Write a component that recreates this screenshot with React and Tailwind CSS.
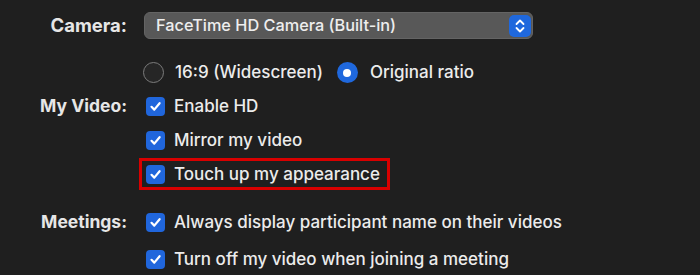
const Check = () => (
  <span className="w-[19px] h-[19px] rounded-[4px] bg-[#2066dc] flex items-center justify-center shrink-0">
    <svg width="13" height="13" viewBox="0 0 13 13" fill="none">
      <path d="M2.5 6.8 L5.3 9.6 L10.6 3.2" stroke="white" strokeWidth="2.2" strokeLinecap="round" strokeLinejoin="round" />
    </svg>
  </span>
);

const Label = ({ children, className = 'text-[17.5px]' }) => (
  <span className={`w-[127px] shrink-0 text-right font-bold text-[#e6e6e6] ${className}`}>{children}</span>
);

const CheckRow = ({ label, text, className = '' }) => (
  <div className={`flex items-center h-[24px] ${className}`}>
    <Label>{label}</Label>
    <div className="ml-[19px] flex items-center gap-[9px]">
      <Check />
      <span>{text}</span>
    </div>
  </div>
);

export default function App() {
  return (
    <div
      className="w-[700px] h-[275px] bg-[#1f1f1f] text-[#ececec] text-[17px] font-medium leading-none overflow-hidden"
      style={{ fontFamily: 'Inter, "Liberation Sans", sans-serif' }}
    >
      <div className="flex flex-col pt-[12px]">
        {/* Camera */}
        <div className="flex items-center h-[27px]">
          <Label className="text-[18.5px]">Camera:</Label>
          <div className="ml-[17px] w-[389px] h-[27px] rounded-[6px] bg-[#585858] border border-[#646464] flex items-center justify-between pl-[11px] pr-[1px]">
            <span className="text-[16.3px] text-[#eeeeee]">FaceTime HD Camera (Built-in)</span>
            <span className="w-[22px] h-[22px] rounded-[5px] bg-[#1f68dd] flex items-center justify-center">
              <svg width="12" height="16" viewBox="0 0 12 16" fill="none">
                <path d="M2.5 6 L6 2.5 L9.5 6" stroke="white" strokeWidth="1.8" strokeLinecap="round" strokeLinejoin="round" />
                <path d="M2.5 10 L6 13.5 L9.5 10" stroke="white" strokeWidth="1.8" strokeLinecap="round" strokeLinejoin="round" />
              </svg>
            </span>
          </div>
        </div>

        {/* Ratio */}
        <div className="flex items-center h-[21px] mt-[23px]">
          <span className="w-[127px] shrink-0" />
          <div className="ml-[16px] flex items-center">
            <span className="w-[21px] h-[21px] rounded-full border-[1.5px] border-[#7c7c7c] bg-[#262626]" />
            <span className="ml-[11px]">16:9 (Widescreen)</span>
            <span className="ml-[14px] w-[21px] h-[21px] rounded-full bg-[#1f68dd] flex items-center justify-center">
              <span className="w-[8px] h-[8px] rounded-full bg-white" />
            </span>
            <span className="ml-[12px]">Original ratio</span>
          </div>
        </div>

        <CheckRow label="My Video:" text="Enable HD" className="mt-[11px]" />
        <CheckRow text="Mirror my video" className="mt-[10px]" />

        {/* highlighted */}
        <div className="flex items-center mt-[6px]">
          <span className="w-[127px] shrink-0" />
          <div className="ml-[12px] w-[251px] h-[32px] border-[3px] border-[#d90000] flex items-center pl-[4px] gap-[9px]">
            <Check />
            <span>Touch up my appearance</span>
          </div>
        </div>

        <CheckRow label="Meetings:" text="Always display participant name on their videos" className="mt-[20px]" />
        <CheckRow text="Turn off my video when joining a meeting" className="mt-[13px]" />
      </div>
    </div>
  );
}
